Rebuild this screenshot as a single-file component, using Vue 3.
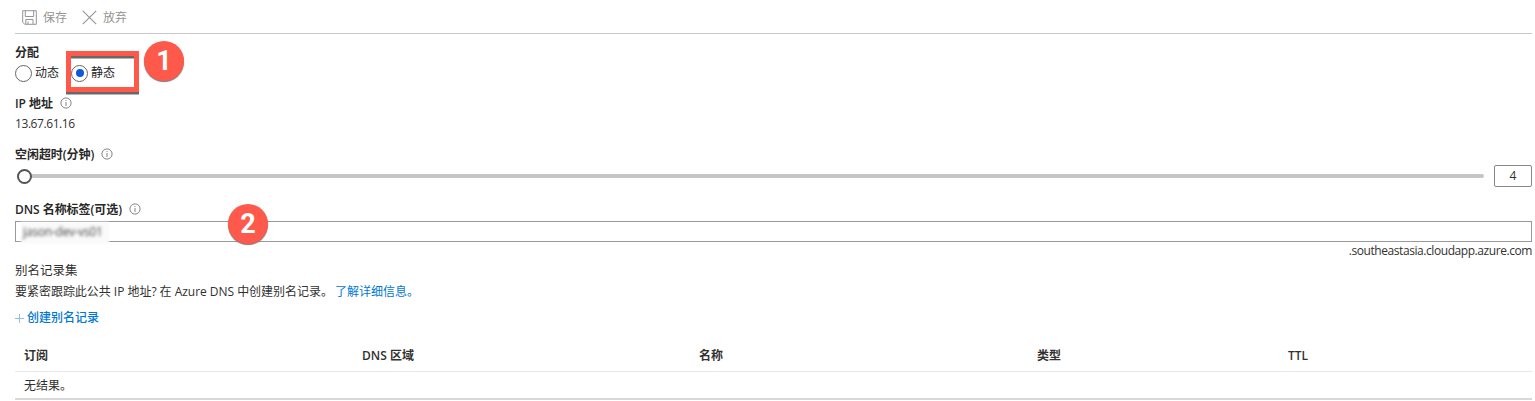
<script setup>
const columns = ['订阅', 'DNS 区域', '名称', '类型', 'TTL']
</script>

<template>
  <main class="panel">
    <header class="toolbar">
      <button class="command save">
        <svg width="15" height="15" viewBox="0 0 15 15" fill="none" stroke="currentColor">
          <path d="M.7.7H14.3V14.3H2.7L.7 12.3ZM3.3.7V6.5H11.7V.7M3.8 14V9.5H11V14M6 11.5V14" />
        </svg>
        <span>保存</span>
      </button>
      <button class="command">
        <svg width="15" height="15" viewBox="0 0 15 15" fill="none" stroke="currentColor" stroke-width="1.1">
          <path d="M.8.8 14.2 14.2M14.2.8.8 14.2" />
        </svg>
        <span>放弃</span>
      </button>
    </header>

    <div class="label assignment"><span>分配</span></div>
    <div class="radios">
      <div class="option"><i class="radio"></i><span>动态</span></div>
      <div class="option chosen">
        <svg class="frame" width="80" height="52" viewBox="0 0 80 52">
          <rect x="4.5" y="8" width="68" height="36" fill="none" stroke="#686868" stroke-width="5" class="shade" />
          <rect x="4.5" y="5.5" width="68" height="36" fill="none" stroke="#ff594b" stroke-width="5" />
        </svg>
        <i class="radio on"></i><span>静态</span>
        <b class="step one">1</b>
      </div>
    </div>

    <div class="label ip-label"><span class="ip-name">IP 地址</span>
      <svg class="info" width="12" height="12" viewBox="0 0 12 12"><circle cx="6" cy="6" r="5.1" /><path d="M6 5V9M6 3V4" /></svg>
    </div>
    <div class="ip"><span class="digits">13.67.61.16</span></div>
    <div class="label timeout-label"><span>空闲超时(分钟)</span>
      <svg class="info" width="12" height="12" viewBox="0 0 12 12"><circle cx="6" cy="6" r="5.1" /><path d="M6 5V9M6 3V4" /></svg>
    </div>
    <div class="slider-row">
      <div class="slider"><i class="thumb"></i><i class="track"></i></div>
      <div class="minutes">4</div>
    </div>

    <div class="label dns-label"><span>DNS 名称标签(可选)</span>
      <svg class="info" width="12" height="12" viewBox="0 0 12 12"><circle cx="6" cy="6" r="5.1" /><path d="M6 5V9M6 3V4" /></svg>
    </div>
    <div class="dns-input">
      <div class="mask"><span>jason-dev-vs01</span></div>
      <b class="step two">2</b>
    </div>
    <div class="suffix"><span>.southeastasia.cloudapp.azure.com</span></div>

    <div class="heading">别名记录集</div>
    <div class="description"><span>要紧密跟踪此公共 IP 地址? 在 Azure DNS 中创建别名记录。</span><a>了解详细信息。</a></div>
    <div class="create">
      <svg width="9" height="9" viewBox="0 0 9 9"><path d="M4.5 0V9M0 4.5H9" fill="none" stroke="#8fc3de" /></svg>
      <a>创建别名记录</a>
    </div>

    <section class="table">
      <div class="columns"><span v-for="column in columns" :key="column">{{ column }}</span></div>
      <div class="empty">无结果。</div>
    </section>
  </main>
</template>

<style>
body { background: #fff; }
</style>

<style scoped>
* { box-sizing: border-box; }
.panel {
  width: 1535px;
  height: 401px;
  overflow: hidden;
  padding: 0 3px 0 15px;
  color: #323130;
  font: 12px/20px "Open Sans", "Noto Sans CJK SC", sans-serif;
  white-space: nowrap;
}
.toolbar { display: flex; height: 34px; border-bottom: 1px solid #c8c8c8; padding: 1px 0 0 7px; color: #949494; gap: 15px; }
.command { display: flex; align-items: center; gap: 6px; border: 0; background: none; padding: 0; font: inherit; color: inherit; }
.command span { line-height: 22px; padding-top: 1px; }
.label { display: flex; align-items: center; font-weight: 600; height: 20px; color: #292827; }
.label span { padding-top: 1px; letter-spacing: -.05px; }
.assignment { margin-top: 8px; }
.radios { display: flex; height: 22px; }
.option { display: flex; align-items: center; gap: 3px; width: 56px; position: relative; color: #252525; }
.radio { position: relative; display: flex; align-items: center; justify-content: center; width: 17px; height: 17px; border: 1px solid #666; border-radius: 50%; }
.radio.on::after { content: ""; width: 8px; height: 8px; border-radius: 50%; background: #0c59dc; }
.frame { position: absolute; left: -7px; top: -14px; overflow: visible; }
.shade { filter: blur(.5px); }
.step { position: absolute; width: 40px; height: 40px; border-radius: 50%; background: #ff594b; color: #fff; font: bold 27px/41px Roboto, sans-serif; text-align: center; box-shadow: 0 1px 1px #777; }
.one { left: 73px; top: -21px; }
.two { left: 212px; top: -18px; }
.ip-label { margin-top: 9px; }
.info { margin-left: 7px; fill: none; stroke: #666; stroke-width: .8; }
.ip { height: 20px; margin-top: 1px; }
.digits { letter-spacing: -.42px; }
.timeout-label { margin-top: 10px; }
.slider-row { display: flex; align-items: center; justify-content: space-between; height: 24px; }
.slider { display: flex; align-items: center; width: 1469px; padding-left: 2px; }
.thumb { width: 15px; height: 15px; border: 2px solid #555; border-radius: 50%; }
.track { flex: 1; height: 4px; background: #c8c6c4; border-radius: 0 2px 2px 0; }
.minutes { width: 38px; height: 22px; border: 1px solid #8a8886; border-radius: 2px; text-align: center; }
.dns-label { margin-top: 11px; }
.dns-input { position: relative; height: 21px; margin-top: 2px; border: 1px solid #999; }
.mask { width: 88px; height: 22px; margin-left: 5px; background: #fafafa; line-height: 20px; filter: blur(1px); padding-left: 2px; color: #444; }
.mask span { filter: blur(.9px); display: inline-block; font-size: 12px; letter-spacing: -.25px; }
.suffix { height: 18px; line-height: 18px; text-align: right; letter-spacing: -.43px; }
.heading { height: 20px; margin-top: 1px; font-size: 12.5px; }
.description { display: flex; gap: 2px; height: 20px; margin-top: 1px; }
.description span { letter-spacing: -.03px; }
a { color: #0078d4; }
.create { display: flex; align-items: center; gap: 3px; height: 20px; margin-top: 6px; font-weight: 500; }
.table { margin-top: 13px; border-bottom: 2px solid #d8d8d8; }
.columns { display: grid; grid-template-columns: 338px 337px 338px 251px 1fr; height: 31px; padding-left: 9px; line-height: 30px; border-bottom: 1px solid #e8e8e8; font-weight: 600; }
.empty { height: 26px; padding-left: 9px; line-height: 28px; }
</style>
